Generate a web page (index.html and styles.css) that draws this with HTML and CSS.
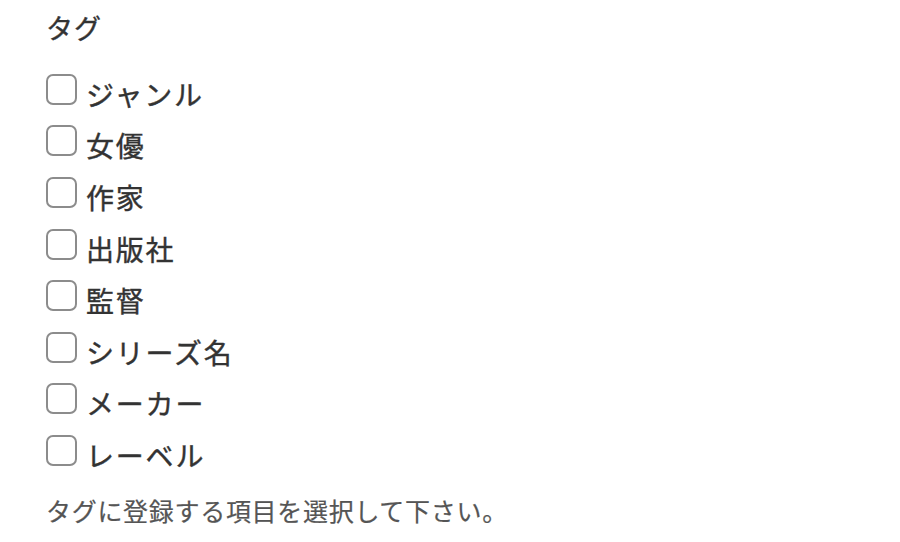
FILE: index.html
```html
<!DOCTYPE html>
<html lang="ja">
<head>
<meta charset="utf-8">
<link rel="stylesheet" href="styles.css">
</head>
<body>
<div class="field">
  <div class="title">タグ</div>
  <ul class="options">
    <li class="option"><span class="box"></span><span class="label">ジャンル</span></li>
    <li class="option"><span class="box"></span><span class="label">女優</span></li>
    <li class="option"><span class="box"></span><span class="label">作家</span></li>
    <li class="option"><span class="box"></span><span class="label">出版社</span></li>
    <li class="option"><span class="box"></span><span class="label">監督</span></li>
    <li class="option"><span class="box"></span><span class="label">シリーズ名</span></li>
    <li class="option"><span class="box"></span><span class="label">メーカー</span></li>
    <li class="option"><span class="box"></span><span class="label">レーベル</span></li>
  </ul>
  <p class="help">タグに登録する項目を選択して下さい。</p>
</div>
</body>
</html>
```
FILE: styles.css
```css
html, body {
  margin: 0;
  padding: 0;
  background: #fff;
}
body {
  font-family: "Noto Sans CJK JP", "Noto Sans", sans-serif;
  color: #333;
}
.field {
  padding: 8px 0 0 46px;
}
.title {
  font-size: 27px;
  line-height: 40px;
  letter-spacing: 1px;
  color: #333;
  -webkit-text-stroke: 0.4px #333;
}
.options {
  list-style: none;
  margin: 0;
  padding: 0;
  padding-top: 20px;
}
.option {
  display: flex;
  align-items: center;
  height: 51.6px;
  gap: 9px;
}
.box {
  box-sizing: border-box;
  width: 31px;
  height: 31px;
  border: 2px solid #8c8c8c;
  border-radius: 7px;
  background: #fff;
  margin-top: -9px;
}
.label {
  font-size: 28px;
  line-height: 40px;
  letter-spacing: 1.8px;
  color: #333;
  -webkit-text-stroke: 0.4px #333;
}
.help {
  margin: 0;
  padding-top: 11px;
  font-size: 25px;
  line-height: 36px;
  letter-spacing: 0.7px;
  color: #555;
  -webkit-text-stroke: 0.2px #555;
}
```
